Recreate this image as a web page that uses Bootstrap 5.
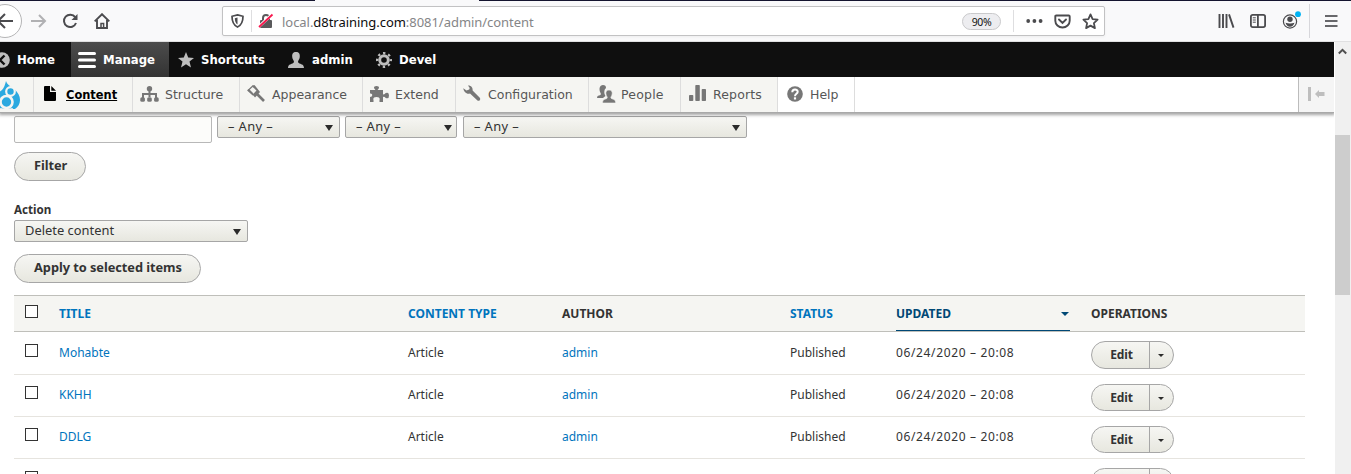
<!DOCTYPE html>
<html lang="en">
<head>
<meta charset="utf-8">
<title>Content | d8training</title>
<link href="https://cdn.jsdelivr.net/npm/bootstrap@5.3.0/dist/css/bootstrap.min.css" rel="stylesheet">
<style>
body{font:12px/16px "Noto Sans",sans-serif;color:#333;background:#fff;height:474px;overflow:hidden}
svg{display:block;flex:none}
a{text-decoration:none;color:#0074bd}
/* browser chrome */
.tabstrip{height:1px;background:linear-gradient(90deg,#14142f 0 315px,#f9f9fa 315px 479px,#14142f 479px)}
.chrome-bar{height:41px;background:#f9f9fa;border-bottom:1px solid #e0e0e1;color:#4b4b4e}
.back-btn{width:34px;height:34px;margin-left:-12px;border:1px solid #b5b5b6;border-radius:50%;background:#fff}
.url-box{width:883px;height:30px;background:#fff;border:1px solid #c2c2c3;border-radius:2px;box-shadow:0 1px 3px #0000000d;margin-left:112px;font-size:13px}
.url-box .rule{width:1px;height:22px;background:#dedee0}
.url-text{color:#858587;margin-left:8px;letter-spacing:-.04px;line-height:18px;padding-top:1px}
.url-text b{font-weight:400;color:#0c0c0d}
.zoom-pill{width:39px;height:17px;border:1px solid #c9c9cb;border-radius:9px;background:#ededf0;color:#111;font-size:10.5px;line-height:16px;letter-spacing:-.35px}
/* admin toolbar */
.viewport{height:432px}
.admin-bar{height:35px;background:#0f0f0f;font:bold 13px/35px "DejaVu Sans Condensed","DejaVu Sans",sans-serif}
.admin-bar a{color:#fff;height:35px}
.admin-bar a svg{margin:0 7px 0 7px}
.admin-bar .on{background:linear-gradient(#4c4c4c,#333)}
.tray{height:36px;background:#fff;border-bottom:1px solid #a9a9a9;box-shadow:0 1px 3px 1px #0000005c;font:12.5px/35px "DejaVu Sans",sans-serif;position:relative;z-index:2;clip-path:inset(0 0 -6px 0)}
.tray a{height:35px;background:#f5f5f2;border-right:1px solid #ddd;color:#565656}
.tray a svg{margin:0 5px 0 7px}
.tray a.on{color:#000;font:bold 12.7px/35px "DejaVu Sans Condensed",sans-serif;text-decoration:underline}
.tray .collapse-btn{width:36px;border-left:1px solid #bcbcbc;background:#f5f5f5;border-right:0}
/* content form */
.drop{height:22px;border:1px solid #a6a6a6;border-radius:2px;background:linear-gradient(#f6f6f3,#e7e7df);font-size:12.9px;line-height:18px;padding:0 6px 2px 10px}
.any{letter-spacing:.4px}
.caret{width:0;height:0;border:4.5px solid transparent;border-top:6px solid #2b2b2b;border-bottom:0;margin-top:4px}
.text-in{width:198px;height:27px;border:1px solid #b8b8b8;border-radius:2px;background:#fcfcfa}
.pill{height:29px;border:1px solid #a6a6a6;border-radius:20px;background:linear-gradient(#f6f6f3,#e7e7df);color:#333;font-weight:700;font-size:12.8px;line-height:25px;padding:0 18px 2px 19px;letter-spacing:-.05px}
/* listing */
.listing{width:1291px;table-layout:fixed;margin:12px 0 0 14px;border-collapse:separate;border-spacing:0}
.listing th{height:37px;background:#f5f5f2;border-top:1px solid #bfbfba;border-bottom:1px solid #bfbfba;vertical-align:middle;padding:0;font-weight:700}
.listing td{height:42px;border-bottom:1px solid #e6e4df;padding:12px 0 0;vertical-align:top}
.listing td:first-child{padding-top:11px}
.listing td:last-child{padding-top:9px}
.listing tr.first td{height:43px;padding-top:13px}
.listing tr.first td:first-child,.listing tr.cut td:first-child{padding-top:12px}
.listing tr.first td:last-child{padding-top:9px}
.listing tr.first .split{height:28px}
.box{display:block;width:13px;height:13px;border:1px solid #333;background:#fff;margin:0 0 0 11px}
th .box{margin-bottom:4px}
.sorted{height:35px;width:174px;border-bottom:1px solid #004875;color:#004875;padding-top:1px}
.sorted .caret{border-width:4px 4px 0;border-top-color:#004875;margin:0 1px 0 0}
.stamp{letter-spacing:.64px}
.split{width:83px;height:27px;border:1px solid #a6a6a6;border-radius:14px;background:linear-gradient(#f6f6f3,#e7e7df);font-weight:700;font-size:12px}
.split span{width:58px;height:100%;border-right:1px solid #a6a6a6;line-height:25px;text-align:center;padding-left:2px;letter-spacing:-.2px}
.split .caret{border-width:3px 3px 0;margin:1px 0 0 8px}
.scroller{width:17px;background:#f0f0f0;border-left:1px solid #fff}
.thumb{height:160px;width:15px;background:#cdcdcd;margin-top:80px}
</style>
<script src="https://cdn.jsdelivr.net/npm/bootstrap@5.3.0/dist/js/bootstrap.bundle.min.js"></script>
</head>
<body>
<div class="tabstrip"></div>
<header class="chrome-bar d-flex align-items-center">
  <div class="back-btn d-flex align-items-center flex-shrink-0"><svg width="32" height="32" viewBox="0 0 32 32" fill="none" stroke="currentColor" stroke-width="2"><path d="M24 16H9M16 9l-7 7 7 7"/></svg></div>
  <svg style="margin-left:9px" width="16" height="16" viewBox="0 0 16 16" fill="none" stroke="#b1b1b3" stroke-width="2"><path d="M0 8h14M8 2l6 6-6 6"/></svg>
  <svg style="margin-left:15px" width="16" height="16" viewBox="0 0 16 16" fill="none" stroke="currentColor" stroke-width="2"><path d="M13.2 4.2A6.2 6.2 0 1 0 14 10"/><path d="M15.500 1v6h-6z" fill="currentColor" stroke="none"/></svg>
  <svg style="margin-left:16px" width="16" height="16" viewBox="0 0 16 16" fill="none" stroke="currentColor" stroke-width="1.900"><path d="M.7 8.400 8 1.200l7.300 7.200M3 7v8h10V7"/><path d="M7 15v-4.500h2.600V15" stroke-width="1.500"/></svg>
  <div class="url-box d-flex align-items-center flex-shrink-0">
    <svg style="margin-left:8px" width="13" height="14" viewBox="0 0 13 14"><path d="M6.500.9 12 2.300c0 5-.7 8.500-5.500 10.800C1.700 10.800 1 7.300 1 2.300z" fill="none" stroke="#4b4b4e" stroke-width="1.700"/><path d="M6.500 3.500 3.800 4.200c.1 3 .8 5 2.700 6.200z" fill="#4b4b4e"/></svg>
    <div class="rule" style="margin-left:7px"></div>
    <svg style="margin-left:6px" width="16" height="16" viewBox="0 0 16 16"><path d="M5 8V5a3 3 0 0 1 6 0v3" fill="none" stroke="#5a5a5c" stroke-width="2"/><rect x="2" y="7" width="12" height="8" rx="1" fill="#5a5a5c"/><path d="M1 13.500 14.500 1" stroke="#fff" stroke-width="3"/><path d="M1 14 14.500 1.500" stroke="#f8184e" stroke-width="1.800"/></svg>
    <div class="url-text flex-grow-1">local.<b>d8training.com</b>:8081/admin/content</div>
    <div class="zoom-pill text-center">90%</div>
    <div class="rule" style="margin-left:12px"></div>
    <svg style="margin-left:12px" width="17" height="6" viewBox="0 0 17 6" fill="#4b4b4e"><circle cx="2.200" cy="3" r="1.900"/><circle cx="8.400" cy="3" r="1.900"/><circle cx="14.600" cy="3" r="1.900"/></svg>
    <svg style="margin-left:11px" width="17" height="15" viewBox="0 0 17 15" fill="none" stroke="#4b4b4e" stroke-width="1.900"><path d="M2.200 1.500h12.600q.9 0 .9.900v4.400a7.200 6.700 0 0 1-14.400 0V2.400q0-.9.900-.9z"/><path d="m5 5.500 3.500 3.400L12 5.500" stroke-linecap="round"/></svg>
    <svg style="margin:0 5px 0 11px" width="17" height="17" viewBox="0 0 17 17"><path d="m8.500 1.400 2.100 4.700 5 .6-3.700 3.400 1 5-4.400-2.500-4.400 2.500 1-5-3.700-3.400 5-.6z" fill="none" stroke="#4b4b4e" stroke-width="1.800" stroke-linejoin="round"/></svg>
  </div>
  <svg style="margin-left:113px" width="17" height="14" viewBox="0 0 17 14" stroke="#4b4b4e" stroke-width="1.900"><path d="M1.500 0v14M5 0v14M8.500 0v14M11 .4l4.500 13.200"/></svg>
  <svg style="margin-left:15px" width="16" height="14" viewBox="0 0 16 14" fill="none" stroke="#4b4b4e" stroke-width="1.800"><rect x=".9" y=".9" width="14.200" height="12.200" rx="1.800"/><path d="M7.900 1v12"/><path d="M2.800 3.800h3M2.800 6h3M2.800 8.200h3" stroke-width="1"/></svg>
  <svg style="margin-left:16px;margin-top:-3px" width="20" height="20" viewBox="0 0 20 20"><circle cx="8" cy="11.500" r="6.600" fill="none" stroke="#4b4b4e" stroke-width="1.200"/><circle cx="8" cy="9.300" r="2.700" fill="#4b4b4e"/><path d="M3.500 12.700q4.500 1.400 9 0-1.400 4-4.500 4t-4.500-4z" fill="#4b4b4e"/><circle cx="16" cy="4.200" r="2.900" fill="#00b3f4"/></svg>
  <div style="width:1px;height:34px;background:#d7d7db;margin-left:7px"></div>
  <svg style="margin-left:15px" width="13" height="12" viewBox="0 0 13 12" stroke="#38383d" stroke-width="1.700"><path d="M0 1h12.500M0 6h12.500M0 11h12.500"/></svg>
</header>
<div class="viewport d-flex">
<div class="flex-grow-1 overflow-hidden">
  <nav class="admin-bar d-flex">
    <a href="#" class="d-flex align-items-center" style="width:71px"><svg style="margin:0 7px 0 -6px" width="16" height="16" viewBox="0 0 16 16"><circle cx="8" cy="8" r="7.800" fill="#bebebe"/><path d="m10.500 3.500-4.500 4.500 4.500 4.500" fill="none" stroke="#0f0f0f" stroke-width="2.400"/></svg>Home</a>
    <a href="#" class="on d-flex align-items-center" style="width:98px"><svg width="18" height="16" viewBox="0 0 18 16" stroke="#fff" stroke-width="3" stroke-linecap="round"><path d="M1.500 1.500h15M1.500 8h15M1.500 14.500h15"/></svg>Manage</a>
    <a href="#" class="d-flex align-items-center" style="width:111px"><svg style="margin:0 7px 0 9px" width="16" height="16" viewBox="0 0 16 16"><path d="m8 0 2.200 5.600 5.800.3-4.500 3.700L13 15.600 8 12.300l-5 3.300 1.500-6L0 5.900l5.800-.3z" fill="#bebebe"/></svg>Shortcuts</a>
    <a href="#" class="d-flex align-items-center" style="width:87px"><svg style="margin-left:8px;margin-right:8px" width="16" height="16" viewBox="0 0 16 16"><path d="M8 0C5 0 4 2 4.200 4.500c0 2 1 3.400 1.600 4.500.5 1-.2 2-1.300 2.500C2 12.500.3 12.500 0 16h16c-.3-3.500-2-3.500-4.500-4.500-1.100-.5-1.800-1.500-1.300-2.500.6-1.100 1.600-2.500 1.600-4.500C12 2 11 0 8 0z" fill="#bebebe"/></svg>admin</a>
    <a href="#" class="d-flex align-items-center"><svg style="margin-left:9px" width="16" height="16" viewBox="0 0 16 16" fill="none" stroke="#bebebe"><circle cx="8" cy="8" r="4.300" stroke-width="3"/><circle cx="8" cy="8" r="6.900" stroke-width="2.200" stroke-dasharray="2.400 3.020" stroke-dashoffset="1.200"/></svg>Devel</a>
  </nav>
  <nav class="tray d-flex">
    <a href="#" class="d-flex align-items-center" style="width:34px"><svg style="margin:1px 0 0 -3px" width="24" height="30" viewBox="0 0 24 30"><path d="M9 1c1 4 5 5 8 8 4 3 6 7 6 11s-2 7-5 9H4c-3-2-5-5-5-9 0-5 3-8 6-10 2-2 3-5 4-9z" fill="#2ba9e0"/><circle cx="13.500" cy="11.500" r="4.300" fill="none" stroke="#f5f5f2" stroke-width="2.200"/><circle cx="9.500" cy="22" r="6" fill="none" stroke="#f5f5f2" stroke-width="2.600"/><path d="M3 29.500q6 1.500 13 0" stroke="#f5f5f2" stroke-width="3"/></svg></a>
    <a href="#" class="on d-flex align-items-center" style="width:99px"><svg style="margin:-3px 10px 0" width="12" height="15" viewBox="0 0 12 15"><path d="M1 0h5v6h6v8q0 1-1 1H1q-1 0-1-1V1q0-1 1-1zM7.300 0 12 4.800H7.300z"/></svg>Content</a>
    <a href="#" class="d-flex align-items-center" style="width:107px"><svg style="margin:-1px 6px 0 7px" width="19" height="16" viewBox="0 0 19 16" fill="#777"><circle cx="9.500" cy="2.700" r="2.700"/><path d="M8.500 4h2v7h-2zM2 7h15v5h-2V9H4v3H2z"/><rect x=".3" y="11.200" width="4.600" height="4.600" rx="1.600"/><rect x="7.200" y="11.200" width="4.600" height="4.600" rx="1.600"/><rect x="14.100" y="11.200" width="4.600" height="4.600" rx="1.600"/></svg>Structure</a>
    <a href="#" class="d-flex align-items-center" style="width:123px"><svg style="margin:-2px 7px 0" width="18" height="17" viewBox="0 0 18 17"><path d="M6 .7 10.500 5.500 6 10 1 5.600z" fill="none" stroke="#777" stroke-width="1.200"/><path d="M7.500 0 13 7 8 12.500 6 10l3.800-4.500L5 1.500z" fill="#777"/><path d="m10 9 7 7" stroke="#777" stroke-width="2.600"/><path d="M.5 5 5 9.500l1.500-1L2 4z" fill="#777"/></svg>Appearance</a>
    <a href="#" class="d-flex align-items-center" style="width:93px"><svg style="margin:-2px 6px 0 7px" width="19" height="16" viewBox="0 0 19 16"><path d="M0 4h5.500Q3.500 2 4.200.7 6.500-.5 8.800.7 9.500 2 7.500 4H13v4.300q1.500.5 2.700-1.200Q19 5.500 19 9.500t-3.300 2.400Q14.500 10.500 13 11v5H9.500v-2q1-2.800-3-3-4 .2-3 3v2H0v-5q2.300-.2 2.300-2T0 7.500z" fill="#777"/></svg>Extend</a>
    <a href="#" class="d-flex align-items-center" style="width:133px"><svg style="margin:-2px 7px 0 7px" width="18" height="17" viewBox="0 0 18 17"><path d="M5 .5C8 .3 10 2.500 9.600 5.500l7.200 7.200q1 1.200 0 2.600-1.400 1-2.600 0L7 8.500C3.500 9.500.6 6.500.3 3.200l3.200 2.200 2.700-.8.500-1.700z" fill="#777"/></svg>Configuration</a>
    <a href="#" class="d-flex align-items-center" style="width:92px"><svg style="margin:-1px 5px 0 8px" width="19" height="18" viewBox="0 0 19 18" fill="#777"><path d="M6 0c2 0 3.200 1.200 3 3.200Q7.200 4 7.300 8q.5 2 1.200 3-1.500.8-2.500 2H0c.2-2.400 1.500-2.300 3.300-3 1-.7.500-1.500 0-2.500C1.800 4 2.500 0 6 0z"/><path d="M12 5c2.400 0 3.400 1.500 3.200 3.500 0 1.500-.7 2.500-1.200 3.400-.4.900.1 1.500 1 1.900 2 .8 3.500.8 3.700 4.200H5.500c.2-3.400 1.500-3.400 3.700-4.200.9-.4 1.300-1 .9-1.900-.5-.9-1.200-1.900-1.200-3.400C8.700 6.500 9.600 5 12 5z" stroke="#f5f5f2" stroke-width=".6"/></svg><span style="letter-spacing:.2px">People</span></a>
    <a href="#" class="d-flex align-items-center" style="width:97px"><svg style="margin:-3px 7px 0 8px" width="17" height="16" viewBox="0 0 17 16" fill="#777"><rect y="10" width="4.300" height="6" rx=".8"/><rect x="6.300" width="4.500" height="16" rx=".8"/><rect x="12.700" y="4" width="4.300" height="12" rx=".8"/></svg><span style="letter-spacing:.15px">Reports</span></a>
    <a href="#" class="d-flex align-items-center bg-white" style="width:77px"><svg style="margin:-1px 7px 0 9px" width="16" height="16" viewBox="0 0 16 16"><circle cx="8" cy="8" r="7.800" fill="#777"/><path d="M5.300 6.200c0-3.400 5.400-3.400 5.400-.4C10.700 7.900 8 7.700 8 10.200" fill="none" stroke="#fff" stroke-width="2"/><rect x="6.900" y="11.300" width="2.200" height="2.200" fill="#fff"/></svg>Help</a>
    <a href="#" class="collapse-btn ms-auto d-flex align-items-center"><svg style="margin:-1px 0 0 9px" width="17" height="14" viewBox="0 0 17 14" fill="#bebebe"><path d="M0 0h3v14H0zM7 7l4-4v2h5.500v4H11v2z"/></svg></a>
  </nav>
  <main>
    <div class="d-flex align-items-start" style="margin:3px 0 0 14px">
      <div class="text-in"></div>
      <div class="drop any d-flex justify-content-between align-items-center" style="width:123px;margin-left:5px">– Any –<i class="caret"></i></div>
      <div class="drop any d-flex justify-content-between align-items-center" style="width:112px;margin-left:5px;padding-right:4px">– Any –<i class="caret"></i></div>
      <div class="drop any d-flex justify-content-between align-items-center" style="width:284px;margin-left:6px">– Any –<i class="caret"></i></div>
    </div>
    <div class="d-flex" style="margin:9px 0 0 14px"><button class="pill" style="width:72px">Filter</button></div>
    <div class="fw-bold" style="margin:21px 0 0 14px;font-size:11.600px;height:18px">Action</div>
    <div class="drop d-flex justify-content-between align-items-center" style="width:234px;margin-left:14px">Delete content<i class="caret"></i></div>
    <div class="d-flex" style="margin:12px 0 0 14px"><button class="pill text-nowrap" style="width:187px">Apply to selected items</button></div>
    <table class="listing">
      <colgroup><col style="width:45px"><col style="width:349px"><col style="width:154px"><col style="width:228px"><col style="width:106px"><col style="width:195px"><col></colgroup>
      <thead><tr><th><i class="box"></i></th><th><a href="#">TITLE</a></th><th><a href="#">CONTENT TYPE</a></th><th>AUTHOR</th><th><a href="#">STATUS</a></th><th><div class="sorted d-flex justify-content-between align-items-center">UPDATED<i class="caret"></i></div></th><th>OPERATIONS</th></tr></thead>
      <tbody>
        <tr class="first"><td><i class="box"></i></td><td><a href="#">Mohabte</a></td><td>Article</td><td><a href="#">admin</a></td><td>Published</td><td class="stamp">06/24/2020 – 20:08</td><td><div class="split d-flex align-items-center"><span>Edit</span><i class="caret"></i></div></td></tr>
        <tr><td><i class="box"></i></td><td><a href="#">KKHH</a></td><td>Article</td><td><a href="#">admin</a></td><td>Published</td><td class="stamp">06/24/2020 – 20:08</td><td><div class="split d-flex align-items-center"><span>Edit</span><i class="caret"></i></div></td></tr>
        <tr><td><i class="box"></i></td><td><a href="#">DDLG</a></td><td>Article</td><td><a href="#">admin</a></td><td>Published</td><td class="stamp">06/24/2020 – 20:08</td><td><div class="split d-flex align-items-center"><span>Edit</span><i class="caret"></i></div></td></tr>
        <tr class="cut"><td><i class="box"></i></td><td></td><td></td><td></td><td></td><td></td><td><div class="split d-flex align-items-center"><span></span></div></td></tr>
      </tbody>
    </table>
  </main>
</div>
<aside class="scroller flex-shrink-0"><svg style="margin:6px 0 0 3px" width="9" height="7" viewBox="0 0 9 7" fill="none" stroke="#505050" stroke-width="2"><path d="m.8 5.500 3.700-3.700 3.700 3.700"/></svg><div class="thumb"></div></aside>
</div>
</body>
</html>
